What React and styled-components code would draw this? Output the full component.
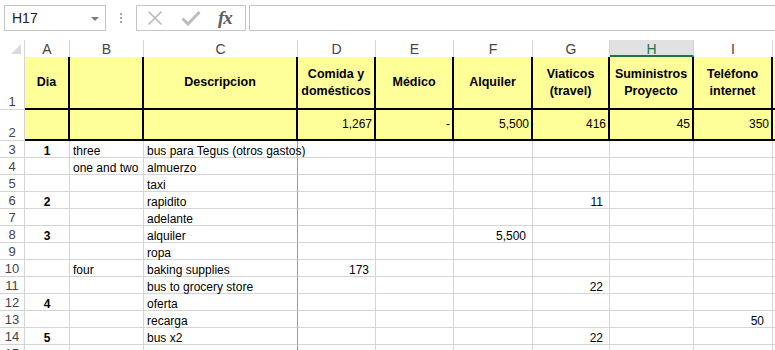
import React from 'react';
import styled, { createGlobalStyle } from 'styled-components';

const GlobalStyle = createGlobalStyle`
    html, body {
        margin: 0;
        padding: 0;
        background: #ffffff;
        overflow: hidden;
    }
    body {
        font-family: "Liberation Sans", Arial, sans-serif;
        color: #000;
    }
    * {
        box-sizing: border-box;
    }
`;

const Page = styled.div`
    width: 775px;
    height: 350px;
    overflow: hidden;
    background: #fff;
`;

// ---- formula bar ----
const FormulaBar = styled.div`
    display: flex;
    align-items: flex-start;
    height: 40px;
    padding: 5px 0 0 4px;
`;

const NameBox = styled.div`
    width: 102px;
    height: 26px;
    border: 1px solid #c6c6c6;
    display: flex;
    align-items: center;
    justify-content: space-between;
    padding: 0 6px 0 7px;
    font-size: 14px;
    color: #222;
`;

const Caret = styled.span`
    width: 0;
    height: 0;
    border-left: 4px solid transparent;
    border-right: 4px solid transparent;
    border-top: 4px solid #7a7a7a;
    margin-top: 1px;
`;

const Grip = styled.div`
    width: 30px;
    height: 26px;
    display: flex;
    flex-direction: column;
    align-items: center;
    justify-content: center;
    gap: 2px;
    span {
        width: 2px;
        height: 2px;
        background: #a6a6a6;
    }
`;

const FnBox = styled.div`
    width: 110px;
    height: 26px;
    border: 1px solid #c6c6c6;
    display: flex;
    align-items: center;
    padding-left: 10px;
    gap: 18px;
`;

const Fx = styled.span`
    font-family: "Liberation Serif", "Times New Roman", serif;
    font-style: italic;
    font-weight: bold;
    font-size: 19px;
    color: #5e5e5e;
    margin-left: -1px;
    letter-spacing: -1px;
`;

const FormulaInput = styled.div`
    flex: 1;
    height: 26px;
    margin-left: 3px;
    border: 1px solid #c6c6c6;
    border-right: none;
`;

// ---- sheet grid ----
const Sheet = styled.div`
    display: grid;
    grid-template-columns: 25px 45px 74px 154px 78px 78px 79px 77px 84px 79px 90px;
    grid-template-rows: 17px 53px 31px;
    grid-auto-rows: 17px;
    font-size: 12px;
`;

const Corner = styled.div`
    position: relative;
    border-right: 1px solid #d4d4d4;
    &::after {
        content: '';
        position: absolute;
        right: 3px;
        bottom: 3px;
        width: 0;
        height: 0;
        border-left: 10px solid transparent;
        border-bottom: 10px solid #dadada;
    }
`;

const ColHead = styled.div`
    display: flex;
    align-items: center;
    justify-content: center;
    font-size: 14px;
    color: ${p => (p.$selected ? '#217346' : '#444')};
    background: ${p => (p.$selected ? '#e1e1e1' : '#fff')};
    border-right: 1px solid #d4d4d4;
    border-bottom: ${p => (p.$selected ? '2px solid #217346' : 'none')};
    padding-top: ${p => (p.$selected ? '2px' : '0')};
`;

const RowHead = styled.div`
    display: flex;
    align-items: flex-end;
    justify-content: center;
    font-size: 13px;
    line-height: 14px;
    color: #444;
    border-right: 1px solid #d4d4d4;
    border-bottom: 1px solid #d4d4d4;
`;

const Band = styled.div`
    display: flex;
    align-items: center;
    justify-content: ${p => p.$align || 'flex-end'};
    text-align: center;
    background: #ffff99;
    border-right: 2px solid #000;
    border-bottom: 2px solid #000;
    font-weight: ${p => (p.$bold ? 'bold' : 'normal')};
    font-size: ${p => (p.$bold ? '12.5px' : '12px')};
    line-height: 17px;
    padding: 0 2px 0 2px;
    white-space: nowrap;
`;

const Cell = styled.div`
    display: flex;
    align-items: flex-end;
    justify-content: ${p => p.$align || 'flex-start'};
    border-right: 1px solid ${p => (p.$frozen ? '#9c9c9c' : '#d4d4d4')};
    border-bottom: 1px solid #d4d4d4;
    font-weight: ${p => (p.$bold ? 'bold' : 'normal')};
    line-height: 12px;
    padding: 0 ${p => p.$pad ?? 3}px 0 3px;
    white-space: nowrap;
    overflow: visible;
`;

const XIcon = () => (
    <svg width="16" height="16" viewBox="0 0 16 16">
        <path d="M1.5 1.5 L14.5 14.5 M14.5 1.5 L1.5 14.5" stroke="#b9b9b9" strokeWidth="1.6" fill="none" />
    </svg>
);

const CheckIcon = () => (
    <svg width="20" height="16" viewBox="0 0 20 16">
        <path d="M1.5 8.5 L7 14 L18.5 2" stroke="#bdbdbd" strokeWidth="3" fill="none" />
    </svg>
);

const columns = ['A', 'B', 'C', 'D', 'E', 'F', 'G', 'H', 'I', ''];

const headers = [
    'Dia',
    '',
    'Descripcion',
    <>Comida y<br />domésticos</>,
    'Médico',
    'Alquiler',
    <>Viaticos<br />(travel)</>,
    <>Suministros<br />Proyecto</>,
    <>Teléfono<br />internet</>,
    '',
];

const totals = ['', '', '', '1,267', '-', '5,500', '416', '45', '350', ''];

// each row: [A, B, C, D, E, F, G, H, I]
const rows = [
    ['1', 'three', 'bus para Tegus (otros gastos)'],
    ['', 'one and two', 'almuerzo'],
    ['', '', 'taxi'],
    ['2', '', 'rapidito', '', '', '', '11'],
    ['', '', 'adelante'],
    ['3', '', 'alquiler', '', '', '5,500'],
    ['', '', 'ropa'],
    ['', 'four', 'baking supplies', '173'],
    ['', '', 'bus to grocery store', '', '', '', '22'],
    ['4', '', 'oferta'],
    ['', '', 'recarga', '', '', '', '', '', '50'],
    ['5', '', 'bus x2', '', '', '', '22'],
    ['', '', '', '', '', '', '', '', '300'],
];

const dataCell = (value, col, key) => {
    if (col === 0) {
        return <Cell key={key} $align="center" $bold>{value}</Cell>;
    }
    if (col === 1) {
        return <Cell key={key}>{value}</Cell>;
    }
    if (col === 2) {
        return <Cell key={key} $frozen>{value}</Cell>;
    }
    return (
        <Cell key={key} $align="flex-end" $pad={col === 8 ? 8 : 6}>
            {value}
        </Cell>
    );
};

const App = () => {
    return (
        <Page>
            <GlobalStyle />
            <FormulaBar>
                <NameBox>
                    H17
                    <Caret />
                </NameBox>
                <Grip>
                    <span />
                    <span />
                    <span />
                </Grip>
                <FnBox>
                    <XIcon />
                    <CheckIcon />
                    <Fx>fx</Fx>
                </FnBox>
                <FormulaInput />
            </FormulaBar>

            <Sheet>
                <Corner />
                {columns.map((c, i) => (
                    <ColHead key={'h' + i} $selected={c === 'H'}>{c}</ColHead>
                ))}

                <RowHead>1</RowHead>
                {headers.map((h, i) => (
                    <Band key={'t' + i} $align="center" $bold>{h}</Band>
                ))}

                <RowHead>2</RowHead>
                {totals.map((v, i) => (
                    <Band key={'s' + i}>{v}</Band>
                ))}

                {rows.map((r, ri) => (
                    <React.Fragment key={'r' + ri}>
                        <RowHead>{ri + 3}</RowHead>
                        {columns.map((_, ci) => dataCell(r[ci] || '', ci, ri + '-' + ci))}
                    </React.Fragment>
                ))}
            </Sheet>
        </Page>
    );
};

export default App;
